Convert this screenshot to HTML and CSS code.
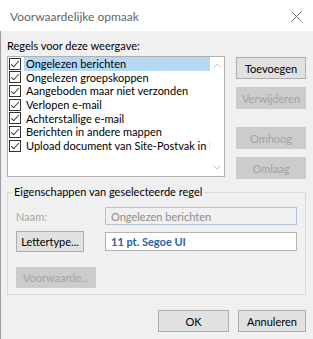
FILE: index.html
```html
<!DOCTYPE html>
<html lang="nl">
<head>
  <meta charset="UTF-8">
  <meta name="viewport" content="width=device-width, initial-scale=1.0">
  <title>Voorwaardelijke opmaak</title>
  <link rel="stylesheet" href="styles.css">
</head>
<body>
  <div class="window">
    <div class="titlebar">
      <span class="title">Voorwaardelijke opmaak</span>
      <svg class="close" width="11" height="11" viewBox="0 0 11 11">
        <path d="M0.5 0.5 L10.5 10.5 M10.5 0.5 L0.5 10.5" stroke="#6a6a6a" stroke-width="1" fill="none"/>
      </svg>
    </div>

    <div class="dialog">
      <div class="rules">
        <div class="rules-left">
          <div class="label">Regels voor deze weergave:</div>
          <div class="listbox">
            <ul class="rule-list">
              <li class="rule selected"><span class="check"></span><span class="rule-name">Ongelezen berichten</span></li>
              <li class="rule"><span class="check"></span><span class="rule-name">Ongelezen groepskoppen</span></li>
              <li class="rule"><span class="check"></span><span class="rule-name">Aangeboden maar niet verzonden</span></li>
              <li class="rule"><span class="check"></span><span class="rule-name">Verlopen e-mail</span></li>
              <li class="rule"><span class="check"></span><span class="rule-name">Achterstallige e-mail</span></li>
              <li class="rule"><span class="check"></span><span class="rule-name">Berichten in andere mappen</span></li>
              <li class="rule"><span class="check"></span><span class="rule-name">Upload document van Site-Postvak in behandeling</span></li>
            </ul>
            <div class="scrollbar">
              <div class="arrow">
                <svg width="8" height="5" viewBox="0 0 8 5"><path d="M0.5 4.5 L4 1 L7.5 4.5" stroke="#c4c4c4" fill="none"/></svg>
              </div>
              <div class="arrow">
                <svg width="8" height="5" viewBox="0 0 8 5"><path d="M0.5 0.5 L4 4 L7.5 0.5" stroke="#c4c4c4" fill="none"/></svg>
              </div>
            </div>
          </div>
        </div>

        <div class="rule-buttons">
          <button class="btn">Toevoegen</button>
          <button class="btn" disabled>Verwijderen</button>
          <button class="btn spaced" disabled>Omhoog</button>
          <button class="btn" disabled>Omlaag</button>
        </div>
      </div>

      <fieldset class="props">
        <legend>Eigenschappen van geselecteerde regel</legend>
        <div class="prop-row first">
          <span class="prop-label">Naam:</span>
          <div class="field name-field">Ongelezen berichten</div>
        </div>
        <div class="prop-row second">
          <button class="btn font-btn">Lettertype...</button>
          <div class="field font-field">11 pt. Segoe UI</div>
        </div>
        <div class="prop-row third">
          <button class="btn cond-btn" disabled>Voorwaarde...</button>
        </div>
      </fieldset>

      <div class="footer">
        <button class="btn ok-btn">OK</button>
        <button class="btn cancel-btn">Annuleren</button>
      </div>
    </div>
  </div>
</body>
</html>
```

FILE: styles.css
```css
body {
  margin: 0;
  font-family: Lato, "Noto Sans", sans-serif;
  font-size: 11px;
  color: #000;
  background: #f0f0f0;
}
.window {
  width: 313px;
  height: 339px;
  display: flex;
  flex-direction: column;
}
.titlebar {
  height: 31px;
  flex: none;
  background: #fff;
  display: flex;
  align-items: center;
  justify-content: space-between;
  padding: 1px 11px 0 10px;
  box-sizing: border-box;
}
.title {
  font-size: 12px;
  color: #666;
}
.dialog {
  flex: 1;
  border-left: 1px solid #9c9c9c;
  padding: 7px 7px 0 6px;
}
.rules {
  display: flex;
  gap: 11px;
}
.rules-left {
  width: 218px;
}
.label {
  line-height: 16px;
  margin-bottom: 2px;
}
.listbox {
  height: 121px;
  box-sizing: border-box;
  border: 1px solid #b0b0b0;
  background: #fff;
  display: flex;
}
.rule-list {
  flex: 1;
  min-width: 0;
  list-style: none;
  margin: 0;
  padding: 0;
}
.rule {
  display: flex;
  align-items: center;
  height: 13.67px;
}
.check {
  flex: none;
  width: 12px;
  height: 12px;
  margin-left: 1px;
  margin-right: 3px;
  box-sizing: border-box;
  border: 1px solid #333;
  background: #fff;
  position: relative;
}
.check::after {
  content: "";
  position: absolute;
  left: 3px;
  top: 0;
  width: 3px;
  height: 7px;
  border-right: 1px solid #333;
  border-bottom: 1px solid #333;
  transform: rotate(42deg);
}
.rule-name {
  flex: 1;
  min-width: 0;
  padding-left: 2px;
  line-height: 13.67px;
  white-space: nowrap;
  overflow: hidden;
}
.rule.selected .rule-name {
  background: #b5d8f4;
}
.scrollbar {
  width: 14px;
  display: flex;
  flex-direction: column;
  justify-content: space-between;
}
.arrow {
  height: 17px;
  display: flex;
  align-items: center;
  justify-content: center;
}
.rule-buttons {
  width: 70px;
  display: flex;
  flex-direction: column;
  gap: 8px;
  padding-top: 19px;
}
.rule-buttons .spaced {
  margin-top: 10px;
}
.btn {
  font: inherit;
  color: #000;
  height: 22px;
  padding: 0;
  box-sizing: border-box;
  border: 1px solid #adadad;
  background: #e1e1e1;
}
.btn:disabled {
  color: #a3a3a3;
  border-color: #cccccc;
  background: #cccccc;
}
.props {
  margin: 5px 0 0;
  padding: 0 8px 6px;
  border: 1px solid #d9d9d9;
  min-width: 0;
}
.props legend {
  padding: 0 2px;
  margin-left: -4px;
  line-height: 16px;
}
.prop-row {
  display: grid;
  grid-template-columns: 89px 1fr;
  align-items: center;
}
.prop-row.first {
  margin-top: 7px;
}
.prop-row.second {
  margin-top: 6px;
}
.prop-row.third {
  margin-top: 15px;
}
.prop-label {
  color: #a6a6a6;
}
.field {
  box-sizing: border-box;
  border: 1px solid;
  padding-left: 5px;
  display: flex;
  align-items: center;
}
.name-field {
  height: 18px;
  border-color: #b3c4d6;
  background: #f0f0f0;
  color: #8c8c8c;
}
.font-field {
  height: 19px;
  border-color: #b4b4b4;
  background: #fff;
  color: #2a62a6;
  font-weight: bold;
}
.font-btn {
  width: 68px;
  height: 21px;
}
.cond-btn {
  width: 80px;
  height: 21px;
}
.footer {
  display: flex;
  justify-content: flex-end;
  gap: 9px;
  margin-top: 15px;
}
.ok-btn {
  width: 71px;
}
.cancel-btn {
  width: 68px;
}
```
